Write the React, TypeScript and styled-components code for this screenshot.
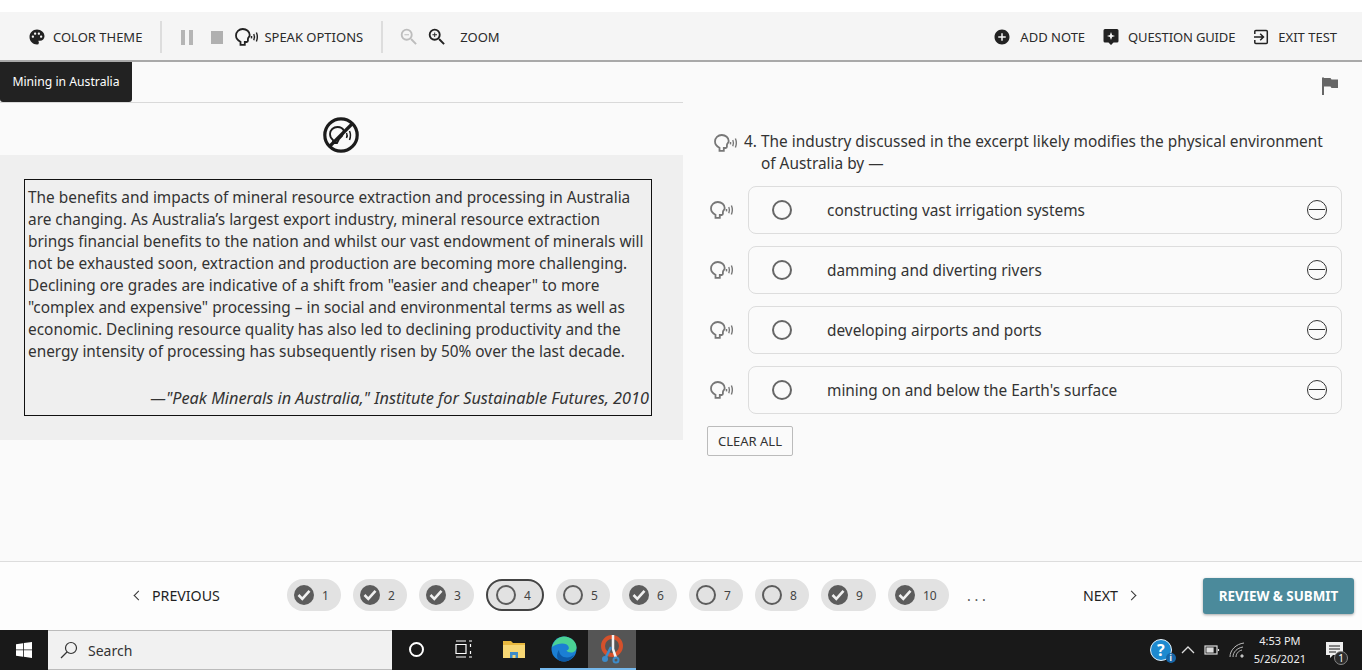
import styled, { createGlobalStyle } from "styled-components";
import { MdPalette, MdAddCircle, MdZoomIn, MdZoomOut } from "react-icons/md";

const GlobalStyle = createGlobalStyle`
  html, body {
    margin: 0;
    padding: 0;
    background: #ffffff;
    font-family: "Noto Sans", "Open Sans", sans-serif;
    color: #333333;
  }
  * { box-sizing: border-box; }
`;

const passage = [
  "The benefits and impacts of mineral resource extraction and processing in Australia",
  "are changing. As Australia’s largest export industry, mineral resource extraction",
  "brings financial benefits to the nation and whilst our vast endowment of minerals will",
  "not be exhausted soon, extraction and production are becoming more challenging.",
  'Declining ore grades are indicative of a shift from "easier and cheaper" to more',
  '"complex and expensive" processing – in social and environmental terms as well as',
  "economic. Declining resource quality has also led to declining productivity and the",
  "energy intensity of processing has subsequently risen by 50% over the last decade.",
];

const options = [
  "constructing vast irrigation systems",
  "damming and diverting rivers",
  "developing airports and ports",
  "mining on and below the Earth's surface",
];

const pills = [
  { n: 1, done: true, w: 54 },
  { n: 2, done: true, w: 54 },
  { n: 3, done: true, w: 55 },
  { n: 4, done: false, w: 58, current: true },
  { n: 5, done: false, w: 54 },
  { n: 6, done: true, w: 55 },
  { n: 7, done: false, w: 54 },
  { n: 8, done: false, w: 54 },
  { n: 9, done: true, w: 55 },
  { n: 10, done: true, w: 61 },
];

function SpeakIcon({ color = "#555" }: { color?: string }) {
  return (
    <svg width="24" height="18" viewBox="0 0 24 18" fill="none" stroke={color}>
      <path
        d="M5.500 16.800v-3C2.700 12.500 1 10.300 1 7.600 1 3.900 4 1 7.800 1s6.900 2.700 6.900 6c0 .9-.3 1.500-.9 2.200-.5.6-.9 1.200-.9 2v1.600c0 .8-.5 1.200-1.200 1.200H9.800v2.800z"
        strokeWidth="1.800"
      />
      <path d="M16.500 8v2.400" strokeWidth="1.500" />
      <path d="M18.800 6c.8 1.800.8 4.300 0 6.200" strokeWidth="1.400" />
      <path d="M21.400 4.500c1.100 2.600 1.100 6.300 0 9" strokeWidth="1.400" />
    </svg>
  );
}

function MuteIcon() {
  return (
    <svg width="38" height="38" viewBox="0 0 38 38" fill="none" stroke="#1c1c1c">
      <circle cx="19" cy="19" r="16.200" strokeWidth="3.200" />
      <path d="M11 27v-3c-2-1.500-3-3.600-3-6 0-4 3.400-7 7.500-7 3 0 5.500 1.500 6.500 4l-2 5-3 3-2 4z" strokeWidth="1.800" />
      <path d="M8 30 30 8" strokeWidth="3.200" />
      <path d="M24.500 17c.8 1.500.8 3.500 0 5" strokeWidth="1.500" />
      <path d="M27.500 15c1.200 2.500 1.200 6 0 9" strokeWidth="1.500" />
    </svg>
  );
}

function CheckMark() {
  return (
    <svg width="14" height="12" viewBox="0 0 14 12" fill="none" stroke="#f0f0f0" strokeWidth="2.600">
      <path d="M1.500 6 5.300 9.800 12.500 1.800" />
    </svg>
  );
}

function QuestionGuideIcon() {
  return (
    <svg width="16" height="18" viewBox="0 0 16 18">
      <path d="M2 1h12a1.500 1.500 0 0 1 1.500 1.500V13a1.500 1.500 0 0 1-1.500 1.500h-3.500L8 17l-2.500-2.500H2A1.500 1.500 0 0 1 .5 13V2.500A1.500 1.500 0 0 1 2 1z" fill="#222" />
      <path d="M8 4l1.100 2.900L12 8l-2.900 1.100L8 12 6.900 9.100 4 8l2.900-1.100z" fill="#f5f5f5" />
    </svg>
  );
}

function ExitIcon() {
  return (
    <svg width="16" height="16" viewBox="0 0 16 16" fill="none" stroke="#222" strokeWidth="1.500">
      <path d="M1.800 5V2.500a1 1 0 0 1 1-1h10.500a1 1 0 0 1 1 1v11a1 1 0 0 1-1 1H2.800a1 1 0 0 1-1-1V11" />
      <path d="M1 8h9M7.200 4.800 10.500 8l-3.300 3.200" />
    </svg>
  );
}

function FlagIcon() {
  return (
    <svg width="18" height="18" viewBox="0 0 18 18" fill="#666">
      <path d="M1 .5h2V18H1z" />
      <path d="M3 1h6.500l1 1.500H17V11h-6.500l-1-1.500H3z" />
    </svg>
  );
}

function WindowsLogo() {
  return (
    <svg width="16" height="16" viewBox="0 0 16 16" fill="#ffffff">
      <path d="M0 2.200 7 1.200V7.500H0zM7.800 1.100 16 0v7.500H7.800zM0 8.300h7v6.400l-7-1zM7.800 8.300H16V16l-8.200-1.200z" />
    </svg>
  );
}

function FolderIcon() {
  return (
    <svg width="22" height="18" viewBox="0 0 22 18">
      <path d="M0 1h8l2 2h12v15H0z" fill="#e8b83e" />
      <path d="M0 5h22v13H0z" fill="#f7d774" />
      <path d="M7 12h8v6h-2.500v-3h-3v3H7z" fill="#3d8bc9" />
    </svg>
  );
}

function EdgeIcon() {
  return (
    <svg width="26" height="26" viewBox="0 0 26 26">
      <circle cx="13" cy="13" r="12.500" fill="#1b7fd4" />
      <path d="M1 11C3 4 8 .5 13 .5c7 0 12.500 5 12.500 11 0 3-2.500 5-5.500 5-2 0-4-.7-4.500-2 2-.5 3-2 2-4-1.500-3-8-5-16.500.5z" fill="#4ad295" />
      <path d="M8 14c0 4 3 7.500 8 7.500 3 0 5-1 7-3-2 5-6 7-10 7-3 0-5-1-5-1-3-3-2-8 0-10.500z" fill="#0c59a6" />
    </svg>
  );
}

function SnipIcon() {
  return (
    <svg width="24" height="30" viewBox="0 0 24 30" fill="none">
      <circle cx="12" cy="12" r="9" stroke="#d5512b" strokeWidth="4" />
      <path d="M13 1v14l3 9" stroke="#f2f2f2" strokeWidth="2.500" />
      <path d="M11 13 6 23" stroke="#3d8bc9" strokeWidth="2.500" />
      <circle cx="5" cy="25" r="3" fill="#3d8bc9" />
      <circle cx="16" cy="26" r="2.500" stroke="#3d8bc9" strokeWidth="2" />
    </svg>
  );
}

export default function App() {
  return (
    <Page>
      <GlobalStyle />
      <TopStrip />
      <Toolbar>
        <ToolGroup>
          <ThemeItem>
            <MdPalette size={18} color="#222" />
            <span>COLOR THEME</span>
          </ThemeItem>
          <Divider />
          <PauseBars>
            <i />
            <i />
          </PauseBars>
          <StopSquare />
          <SpeakItem>
            <SpeakIcon color="#222" />
            <span>SPEAK OPTIONS</span>
          </SpeakItem>
          <Divider />
          <ZoomIcons>
            <MdZoomOut size={22} color="#bdbdbd" />
            <MdZoomIn size={22} color="#222" />
          </ZoomIcons>
          <ZoomLabel>ZOOM</ZoomLabel>
        </ToolGroup>
        <ToolGroupRight>
          <ToolItem>
            <MdAddCircle size={18} color="#222" />
            <span>ADD NOTE</span>
          </ToolItem>
          <ToolItem>
            <QuestionGuideIcon />
            <TightLabel>QUESTION GUIDE</TightLabel>
          </ToolItem>
          <ToolItem>
            <ExitIcon />
            <span>EXIT TEST</span>
          </ToolItem>
        </ToolGroupRight>
      </Toolbar>

      <Main>
        <LeftPane>
          <TabRow>
            <Tab>Mining in Australia</Tab>
          </TabRow>
          <MuteRow>
            <MuteIcon />
          </MuteRow>
          <PassageArea>
            <PassageBox>
              {passage.map((line) => (
                <PassageLine key={line}>{line}</PassageLine>
              ))}
              <Citation>—"Peak Minerals in Australia," Institute for Sustainable Futures, 2010</Citation>
            </PassageBox>
          </PassageArea>
        </LeftPane>
        <RightPane>
          <FlagRow>
            <FlagIcon />
          </FlagRow>
          <Question>
            <QuestionIcon>
              <SpeakIcon color="#777" />
            </QuestionIcon>
            <QuestionNumber>4.</QuestionNumber>
            <QuestionText>
              The industry discussed in the excerpt likely modifies the physical environment of Australia by —
            </QuestionText>
          </Question>
          <OptionList>
            {options.map((text) => (
              <OptionRow key={text}>
                <SpeakIcon color="#777" />
                <OptionCard>
                  <Radio />
                  <OptionText>{text}</OptionText>
                  <Eliminate />
                </OptionCard>
              </OptionRow>
            ))}
          </OptionList>
          <ClearAll>CLEAR ALL</ClearAll>
        </RightPane>
      </Main>

      <Footer>
        <PrevButton>
          <Chevron $left />
          PREVIOUS
        </PrevButton>
        <Pills>
          {pills.map((p) => (
            <Pill key={p.n} $w={p.w} $current={p.current}>
              <PillMark $done={p.done}>{p.done && <CheckMark />}</PillMark>
              <PillNumber>{p.n}</PillNumber>
            </Pill>
          ))}
          <Dots>. . .</Dots>
        </Pills>
        <NextButton>
          NEXT
          <Chevron />
        </NextButton>
        <ReviewButton>REVIEW &amp; SUBMIT</ReviewButton>
      </Footer>

      <Taskbar>
        <StartButton>
          <WindowsLogo />
        </StartButton>
        <SearchBox>
          <svg width="18" height="18" viewBox="0 0 18 18" fill="none" stroke="#333" strokeWidth="1.200">
            <circle cx="11" cy="7" r="5.500" />
            <path d="M7 11 1 17" />
          </svg>
          <span>Search</span>
        </SearchBox>
        <TaskSlot>
          <CortanaRing />
        </TaskSlot>
        <TaskSlot>
          <svg width="18" height="18" viewBox="0 0 18 18" fill="none" stroke="#ffffff" strokeWidth="1.200">
            <path d="M1 1h10M1 17h10M1 4.500h10v9H1zM14 1h3M14 17h3M15.500 4v3M15.500 11v3" />
          </svg>
        </TaskSlot>
        <TaskSlot $w={52}>
          <FolderIcon />
        </TaskSlot>
        <TaskSlot $w={48} $running>
          <EdgeIcon />
        </TaskSlot>
        <TaskSlot $w={48} $running $active>
          <SnipIcon />
        </TaskSlot>
        <Tray>
          <TrayHelp>
            ?<TrayHelpBadge>i</TrayHelpBadge>
          </TrayHelp>
          <svg width="14" height="8" viewBox="0 0 14 8" fill="none" stroke="#ddd" strokeWidth="1.300">
            <path d="M1 7l6-6 6 6" />
          </svg>
          <svg width="16" height="10" viewBox="0 0 16 10" fill="none" stroke="#ddd" strokeWidth="1.200">
            <rect x="1" y="1" width="12" height="8" />
            <rect x="3" y="3" width="6" height="4" fill="#ddd" />
            <path d="M14.500 4v2" />
          </svg>
          <svg width="16" height="16" viewBox="0 0 16 16" fill="none" stroke="#bbb" strokeWidth="1">
            <path d="M1 15C1 8 7 2 15 1M4 15c0-5 4-9 10-10M7 15c0-3 2-6 6-7" />
            <circle cx="13" cy="14" r="1.200" fill="#ddd" />
          </svg>
          <Clock>
            <span>4:53 PM</span>
            <span>5/26/2021</span>
          </Clock>
          <NotifyWrap>
            <svg width="18" height="17" viewBox="0 0 18 17">
              <path d="M0 0h17v13H7l-3 3v-3H0z" fill="#eeeeee" />
              <path d="M3 4h11M3 7h11M3 10h7" stroke="#1a1a1a" strokeWidth="1.200" />
            </svg>
            <NotifyBadge>1</NotifyBadge>
          </NotifyWrap>
        </Tray>
      </Taskbar>
    </Page>
  );
}

const Page = styled.div`
  width: 1362px;
  height: 670px;
  display: flex;
  flex-direction: column;
  overflow: hidden;
  background: #fafafa;
`;

const TopStrip = styled.div`
  height: 12px;
  background: #ffffff;
`;

const Toolbar = styled.div`
  height: 50px;
  background: #f5f5f5;
  border-bottom: 2px solid #a9a9a9;
  display: flex;
  align-items: center;
  justify-content: space-between;
  padding: 2px 25px 0 28px;
  font-size: 13px;
  color: #2b2b2b;
`;

const ToolGroup = styled.div`
  display: flex;
  align-items: center;
`;

const ToolGroupRight = styled(ToolGroup)`
  gap: 18px;
`;

const ToolItem = styled.div`
  display: flex;
  align-items: center;
  gap: 9px;
  white-space: nowrap;
`;

const ThemeItem = styled(ToolItem)`
  gap: 7px;
`;

const SpeakItem = styled(ToolItem)`
  gap: 5px;
`;

const TightLabel = styled.span`
  letter-spacing: -0.14px;
`;

const Divider = styled.div`
  width: 2px;
  height: 32px;
  background: #dddddd;
  margin: 0 18px;
`;

const PauseBars = styled.div`
  display: flex;
  gap: 4px;
  margin: 0 18px 0 1px;

  i {
    display: block;
    width: 4px;
    height: 15px;
    background: #b5b5b5;
  }
`;

const StopSquare = styled.div`
  width: 12px;
  height: 13px;
  background: #b0b0b0;
  margin-right: 12px;
`;

const ZoomIcons = styled.div`
  display: flex;
  align-items: center;
  gap: 6px;
  margin-left: -3px;
`;

const ZoomLabel = styled.span`
  margin-left: 12px;
`;

const Main = styled.div`
  height: 499px;
  display: flex;
  background: #fafafa;
`;

const LeftPane = styled.section`
  width: 683px;
  display: flex;
  flex-direction: column;
`;

const TabRow = styled.div`
  height: 41px;
  border-bottom: 1px solid #d9d9d9;
`;

const Tab = styled.div`
  width: 132px;
  height: 40px;
  padding-bottom: 2px;
  background: #222222;
  color: #ffffff;
  font-size: 12.2px;
  border-radius: 0 0 3px 3px;
  display: flex;
  align-items: center;
  justify-content: center;
  white-space: nowrap;
`;

const MuteRow = styled.div`
  height: 52px;
  display: flex;
  justify-content: center;
  padding: 13px 1px 0 0;
`;

const PassageArea = styled.div`
  height: 285px;
  background: #efefef;
  padding: 24px 31px 0 24px;
`;

const PassageBox = styled.div`
  height: 237px;
  border: 1px solid #111111;
  padding: 7px 0 0 3px;
  font-size: 15.4px;
  line-height: 22px;
  color: #333333;
`;

const PassageLine = styled.div`
  white-space: nowrap;
`;

const Citation = styled.div`
  font-style: italic;
  font-size: 16.300px;
  text-align: right;
  white-space: nowrap;
  margin-top: 24px;
  padding-right: 2px;
`;

const RightPane = styled.section`
  flex: 1;
  padding: 0 20px 0 24px;
  display: flex;
  flex-direction: column;
  align-items: flex-start;
`;

const FlagRow = styled.div`
  align-self: stretch;
  height: 67px;
  display: flex;
  justify-content: flex-end;
  padding: 15px 3px 0 0;
`;

const Question = styled.div`
  display: flex;
  font-size: 15.4px;
  line-height: 22px;
  color: #333333;
  height: 57px;
  padding-top: 2px;
`;

const QuestionIcon = styled.div`
  width: 37px;
  padding: 3px 0 0 7px;
`;

const QuestionNumber = styled.span`
  width: 17px;
`;

const QuestionText = styled.div`
  width: 572px;
`;

const OptionList = styled.div`
  align-self: stretch;
  display: flex;
  flex-direction: column;
  gap: 12px;
`;

const OptionRow = styled.div`
  display: flex;
  align-items: center;
  gap: 14px;
  padding-left: 3px;
`;

const OptionCard = styled.div`
  flex: 1;
  height: 48px;
  background: #fafafa;
  border: 1px solid #dddddd;
  border-radius: 8px;
  display: flex;
  align-items: center;
  padding: 0 14px 0 23px;
  font-size: 15.4px;
  color: #333333;
`;

const Radio = styled.span`
  width: 20px;
  height: 20px;
  border: 2px solid #666666;
  border-radius: 50%;
`;

const OptionText = styled.span`
  flex: 1;
  margin-left: 35px;
`;

const Eliminate = styled.span`
  width: 20px;
  height: 20px;
  border: 1.500px solid #333333;
  border-radius: 50%;
  position: relative;

  &::after {
    content: "";
    position: absolute;
    left: 1px;
    right: 1px;
    top: 7.500px;
    height: 1.500px;
    background: #333333;
  }
`;

const ClearAll = styled.button`
  margin-top: 12px;
  width: 86px;
  height: 30px;
  background: #fafafa;
  border: 1px solid #bbbbbb;
  border-radius: 2px;
  padding: 0;
  font-family: inherit;
  font-size: 13px;
  color: #333333;
`;

const Footer = styled.div`
  height: 69px;
  background: #fdfdfd;
  border-top: 1px solid #dddddd;
  display: flex;
  align-items: center;
  padding: 0 8px 2px 133px;
  font-size: 14.200px;
  color: #222222;
`;

const Chevron = styled.span<{ $left?: boolean }>`
  width: 7px;
  height: 7px;
  border-top: 1.500px solid #333333;
  border-right: 1.500px solid #333333;
  transform: rotate(${({ $left }) => ($left ? "-135deg" : "45deg")});
  margin: ${({ $left }) => ($left ? "0 10px 0 2px" : "0 3px 0 10px")};
`;

const PrevButton = styled.div`
  display: flex;
  align-items: center;
  width: 154px;
`;

const Pills = styled.div`
  display: flex;
  align-items: center;
  gap: 12px;
  width: 796px;
`;

const Pill = styled.div<{ $w: number; $current?: boolean }>`
  width: ${({ $w }) => $w}px;
  height: 32px;
  border-radius: 16px;
  background: #e2e2e2;
  border: ${({ $current }) => ($current ? "2px solid #444444" : "none")};
  display: flex;
  align-items: center;
  gap: 8px;
  padding-left: ${({ $current }) => ($current ? "8px" : "7px")};
`;

const PillMark = styled.span<{ $done: boolean }>`
  width: 20px;
  height: 20px;
  border-radius: 50%;
  flex: none;
  display: flex;
  align-items: center;
  justify-content: center;
  background: ${({ $done }) => ($done ? "#5c5c5c" : "transparent")};
  border: ${({ $done }) => ($done ? "none" : "2px solid #5c5c5c")};
`;

const PillNumber = styled.span`
  font-size: 12px;
  color: #444444;
`;

const Dots = styled.span`
  margin-left: 6px;
  color: #555555;
  white-space: nowrap;
`;

const NextButton = styled.div`
  display: flex;
  align-items: center;
  width: 120px;
`;

const ReviewButton = styled.button`
  width: 151px;
  height: 36px;
  margin-top: 2px;
  border: none;
  border-radius: 3px;
  background: #4b8a9b;
  color: #ffffff;
  font-family: inherit;
  font-size: 13.400px;
  font-weight: 700;
  padding: 0;
  box-shadow: 0 1px 3px rgba(0, 0, 0, 0.35);
  white-space: nowrap;
`;

const Taskbar = styled.div`
  height: 40px;
  background: #191919;
  display: flex;
  align-items: stretch;
`;

const StartButton = styled.div`
  width: 48px;
  display: flex;
  align-items: center;
  justify-content: center;
`;

const SearchBox = styled.div`
  width: 344px;
  background: #f1f1f1;
  border-top: 1px solid #bbbbbb;
  border-bottom: 1px solid #bbbbbb;
  display: flex;
  align-items: center;
  gap: 10px;
  padding-left: 12px;
  font-size: 14px;
  color: #333333;
`;

const TaskSlot = styled.div<{ $w?: number; $running?: boolean; $active?: boolean }>`
  width: ${({ $w }) => $w ?? 48}px;
  display: flex;
  align-items: center;
  justify-content: center;
  background: ${({ $active }) => ($active ? "#555555" : "transparent")};
  border-bottom: 2px solid ${({ $running }) => ($running ? "#76b9ed" : "transparent")};
`;

const CortanaRing = styled.span`
  width: 15px;
  height: 15px;
  border: 2.500px solid #ffffff;
  border-radius: 50%;
`;

const Tray = styled.div`
  margin-left: auto;
  display: flex;
  align-items: center;
  gap: 9px;
  padding-right: 18px;
  color: #eeeeee;
`;

const TrayHelp = styled.span`
  position: relative;
  width: 22px;
  height: 22px;
  border-radius: 50%;
  background: #1e8ad0;
  border: 1.500px solid #e8f4fc;
  color: #ffffff;
  font-size: 16px;
  font-weight: 700;
  display: flex;
  align-items: center;
  justify-content: center;
`;

const TrayHelpBadge = styled.span`
  position: absolute;
  right: -5px;
  bottom: -3px;
  width: 10px;
  height: 10px;
  border-radius: 50%;
  background: #1666a8;
  font-size: 8px;
  line-height: 10px;
  text-align: center;
`;

const Clock = styled.div`
  display: flex;
  flex-direction: column;
  align-items: center;
  font-size: 11px;
  line-height: 18px;
`;

const NotifyWrap = styled.div`
  position: relative;
  margin-left: 11px;
  display: flex;
`;

const NotifyBadge = styled.span`
  position: absolute;
  right: -4px;
  bottom: -6px;
  width: 14px;
  height: 14px;
  border-radius: 50%;
  background: #2c2c2c;
  border: 1px solid #888888;
  font-size: 10px;
  line-height: 12px;
  text-align: center;
  color: #ffffff;
`;
